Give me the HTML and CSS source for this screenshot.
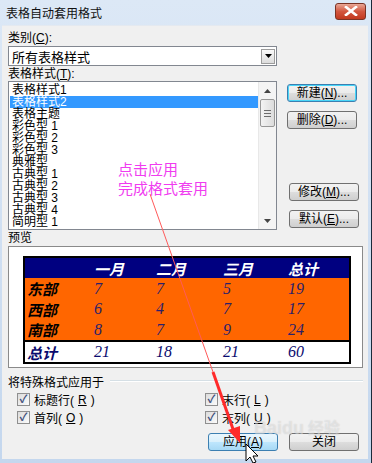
FILE: index.html
```html
<!DOCTYPE html>
<html lang="zh-CN">
<head>
    <meta charset="UTF-8">
    <title>表格自动套用格式</title>
    <link rel="stylesheet" href="styles.css">
</head>
<body>
    <div class="window">
        <div class="titlebar">
            <span class="title">表格自动套用格式</span>
            <span class="close-btn">
                <svg width="14" height="10" viewBox="0 0 14 10"><path d="M2 1 L12 9 M12 1 L2 9" stroke="#fff" stroke-width="2.6" stroke-linecap="square"/></svg>
            </span>
        </div>

        <div class="dialog">
            <div class="label first">类别(<u>C</u>):</div>
            <div class="combo">
                <span class="combo-text">所有表格样式</span>
                <span class="combo-arrow">
                    <svg width="7" height="4" viewBox="0 0 7 4"><path d="M0 0 H7 L3.5 4 Z" fill="#000"/></svg>
                </span>
            </div>

            <div class="label">表格样式(<u>T</u>):</div>
            <div class="main-row">
                <div class="listbox">
                    <ul class="items">
                        <li>表格样式1</li>
                        <li class="selected">表格样式2</li>
                        <li>表格主题</li>
                        <li>彩色型 1</li>
                        <li>彩色型 2</li>
                        <li>彩色型 3</li>
                        <li>典雅型</li>
                        <li>古典型 1</li>
                        <li>古典型 2</li>
                        <li>古典型 3</li>
                        <li>古典型 4</li>
                        <li>简明型 1</li>
                    </ul>
                    <div class="scrollbar">
                        <span class="arrow up"><svg width="7" height="4" viewBox="0 0 7 4"><path d="M0 4 H7 L3.5 0 Z" fill="#444"/></svg></span>
                        <span class="thumb"><i></i><i></i><i></i></span>
                        <span class="track"></span>
                        <span class="arrow down"><svg width="7" height="4" viewBox="0 0 7 4"><path d="M0 0 H7 L3.5 4 Z" fill="#444"/></svg></span>
                    </div>
                </div>
                <div class="side-buttons">
                    <button class="btn default">新建(<u>N</u>)...</button>
                    <button class="btn">删除(<u>D</u>)...</button>
                    <span class="spacer"></span>
                    <button class="btn">修改(<u>M</u>)...</button>
                    <button class="btn">默认(<u>E</u>)...</button>
                </div>
            </div>

            <div class="label">预览</div>
            <div class="preview">
                <div class="sample">
                    <div class="row head">
                        <span></span><span>一月</span><span>二月</span><span>三月</span><span>总计</span>
                    </div>
                    <div class="row body-row">
                        <span class="name">东部</span><span>7</span><span>7</span><span>5</span><span>19</span>
                    </div>
                    <div class="row body-row">
                        <span class="name">西部</span><span>6</span><span>4</span><span>7</span><span>17</span>
                    </div>
                    <div class="row body-row">
                        <span class="name">南部</span><span>8</span><span>7</span><span>9</span><span>24</span>
                    </div>
                    <div class="row total">
                        <span class="name">总计</span><span>21</span><span>18</span><span>21</span><span>60</span>
                    </div>
                </div>
            </div>

            <div class="group-label"><span>将特殊格式应用于</span></div>
            <div class="checks">
                <label class="check"><span class="box">✓</span>标题行(<u>R</u>)</label>
                <label class="check"><span class="box">✓</span>末行(<u>L</u>)</label>
                <label class="check"><span class="box">✓</span>首列(<u>O</u>)</label>
                <label class="check"><span class="box">✓</span>末列(<u>U</u>)</label>
            </div>

            <div class="bottom-buttons">
                <button class="btn hover">应用(<u>A</u>)</button>
                <button class="btn">关闭</button>
            </div>
        </div>

        <div class="note">点击应用<br>完成格式套用</div>

        <div class="watermark">Baidu<span>经验</span></div>

        <svg class="overlay" width="372" height="463" viewBox="0 0 372 463">
            <line x1="150" y1="194" x2="213" y2="372" stroke="#ff5a5a" stroke-width="1"/>
            <line x1="213" y1="372" x2="234" y2="432" stroke="#ff2a2a" stroke-width="3"/>
            <path d="M228 430 L240 443 L240 426 Z" fill="#ff2a2a"/>
            <path d="M246 444 L246 461 L250 457 L253 463 L256 462 L253 456 L258 456 Z" fill="#fff" stroke="#000" stroke-width="1"/>
        </svg>
    </div>
</body>
</html>
```

FILE: styles.css
```css
body {
    margin: 0;
    background: #1b2a3a;
    font-family: "Liberation Sans", "Noto Sans CJK SC", sans-serif;
    font-size: 12px;
    color: #000;
}
.window {
    position: relative;
    width: 371px;
    height: 463px;
    box-sizing: border-box;
    padding: 0 3px 4px 2px;
    background: linear-gradient(#dce8f6, #c4d7ee);
    overflow: hidden;
}
.titlebar {
    height: 25px;
    display: flex;
    align-items: center;
    justify-content: space-between;
    padding: 0 2px 0 4px;
}
.title {
    font-size: 12px;
    color: #111;
}
.close-btn {
    width: 31px;
    height: 17px;
    margin-top: -3px;
    display: flex;
    align-items: center;
    justify-content: center;
    border: 1px solid #7a3325;
    border-radius: 3px;
    background: linear-gradient(#e9a897, #d2563f 50%, #c2391f);
    box-sizing: border-box;
}
.dialog {
    height: 434px;
    box-sizing: border-box;
    background: #f0f0f0;
    padding: 0 5px 0 6px;
    border-top: 1px solid #e4e9f0;
}
.label {
    line-height: 14px;
    height: 14px;
    margin-top: 1px;
}
.label.first {
    margin-top: 5px;
}
.combo {
    width: 269px;
    height: 20px;
    box-sizing: border-box;
    border: 1px solid #828790;
    background: #fff;
    display: flex;
    align-items: center;
    justify-content: space-between;
    margin: 1px 0 0;
    padding: 0 1px 0 3px;
}
.combo-text {
    font-size: 13px;
}
.combo-arrow {
    width: 14px;
    height: 15px;
    box-sizing: border-box;
    border: 1px solid #9c9c9c;
    background: linear-gradient(#fafafa, #dcdcdc);
    display: flex;
    align-items: center;
    justify-content: center;
}
.main-row {
    display: grid;
    grid-template-columns: 269px 1fr;
    height: 149px;
}
.listbox {
    border: 1px solid #828790;
    background: #fff;
    display: flex;
    height: 149px;
    box-sizing: border-box;
}
.items {
    list-style: none;
    margin: 0;
    padding: 2px 0 0 1px;
    flex: 1;
    overflow: hidden;
}
.items li {
    height: 12px;
    line-height: 12px;
    font-size: 12px;
    padding-left: 2px;
    white-space: nowrap;
}
.items li.selected {
    background: #3399ff;
    color: #fff;
}
.scrollbar {
    width: 17px;
    display: flex;
    flex-direction: column;
    background: #f4f4f4;
    border-left: 1px solid #e8e8e8;
}
.arrow {
    height: 17px;
    display: flex;
    align-items: center;
    justify-content: center;
}
.thumb {
    margin: 0 1px;
    height: 26px;
    border: 1px solid #979797;
    border-radius: 2px;
    background: linear-gradient(90deg, #f3f3f3, #dcdcdc);
    display: flex;
    flex-direction: column;
    align-items: center;
    justify-content: center;
    gap: 2px;
}
.thumb i {
    display: block;
    width: 7px;
    height: 1px;
    background: #6c6c6c;
}
.track {
    flex: 1;
}
.side-buttons {
    display: flex;
    flex-direction: column;
    align-items: flex-start;
    gap: 9px;
    padding: 3px 0 0 10px;
}
.side-buttons .spacer {
    height: 36px;
}
.side-buttons .btn:nth-child(n+4) {
    margin-left: 2px;
}
.btn {
    width: 70px;
    height: 18px;
    padding: 0;
    font-family: inherit;
    font-size: 12px;
    line-height: 14px;
    color: #000;
    border: 1px solid #707070;
    border-radius: 3px;
    background: linear-gradient(#f2f2f2 0%, #ebebeb 50%, #dddddd 51%, #cfcfcf 100%);
}
.btn.default {
    border-color: #3c7fb1;
    box-shadow: inset 0 0 0 1px #48d6f8;
}
.btn.hover {
    border-color: #3c7fb1;
    background: linear-gradient(#eaf6fd 0%, #d9f0fc 50%, #bee6fd 51%, #a7d9f5 100%);
}
.preview {
    height: 122px;
    box-sizing: border-box;
    margin-top: 1px;
    border: 1px solid #8a8a8a;
    background: #fff;
    padding: 9px 11px 0 14px;
}
.sample {
    border: 2px solid #000;
    width: 328px;
    box-sizing: border-box;
    font-family: "Liberation Serif", "Noto Sans CJK SC", serif;
    font-style: italic;
    font-size: 16px;
}
.row {
    display: grid;
    grid-template-columns: 67px 62px 67px 65px 1fr;
    padding-left: 2px;
    align-items: center;
}
.row.head {
    height: 20px;
    background: #000080;
    color: #fff;
    font-family: "Noto Sans CJK SC", sans-serif;
    font-weight: bold;
    font-size: 15px;
}
.row.body-row {
    height: 20.5px;
    background: #ff6600;
    color: #2a1f6b;
}
.row.total {
    height: 20px;
    border-top: 2px solid #000;
    background: #fff;
    color: #0a0a6e;
}
.row .name {
    font-family: "Noto Sans CJK SC", sans-serif;
    font-weight: bold;
    font-size: 15px;
    color: #000;
}
.row.total .name {
    color: #0a0a6e;
}
.group-label {
    display: flex;
    align-items: center;
    gap: 6px;
    margin-top: 6px;
    height: 14px;
}
.group-label::after {
    content: "";
    flex: 1;
    border-top: 1px solid #d5dfe5;
    border-bottom: 1px solid #fff;
}
.checks {
    display: grid;
    grid-template-columns: 188px 1fr;
    row-gap: 5px;
    padding: 5px 0 0 9px;
}
.check {
    display: flex;
    align-items: center;
    gap: 4px;
    height: 13px;
    font-size: 12px;
}
.box {
    width: 13px;
    height: 13px;
    box-sizing: border-box;
    border: 1px solid #8f8f8f;
    background: linear-gradient(135deg, #dcdcdc, #fbfbfb);
    color: #3d4f7c;
    font-size: 11px;
    font-weight: bold;
    line-height: 11px;
    text-align: center;
}
.bottom-buttons {
    display: flex;
    gap: 11px;
    padding: 9px 0 0 200px;
}
.note {
    position: absolute;
    left: 118px;
    top: 159px;
    font-family: "Noto Sans CJK SC", sans-serif;
    font-size: 15px;
    line-height: 19px;
    color: #f03cf0;
}
.watermark {
    position: absolute;
    left: 254px;
    top: 415px;
    font-size: 18px;
    font-weight: bold;
    color: rgba(255, 255, 255, 0.4);
    text-shadow: 0 0 1px rgba(120, 120, 120, 0.3);
}
.watermark span {
    font-family: "Noto Sans CJK SC", sans-serif;
    font-size: 16px;
    margin-left: 4px;
}
.overlay {
    position: absolute;
    left: 0;
    top: 0;
    pointer-events: none;
}
```
